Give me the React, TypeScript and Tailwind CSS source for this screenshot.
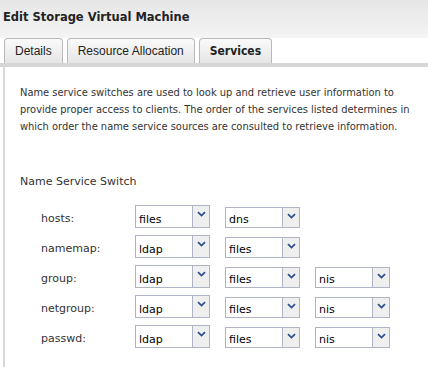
const rows: { label: string; values: string[] }[] = [
  { label: "hosts:", values: ["files", "dns"] },
  { label: "namemap:", values: ["ldap", "files"] },
  { label: "group:", values: ["ldap", "files", "nis"] },
  { label: "netgroup:", values: ["ldap", "files", "nis"] },
  { label: "passwd:", values: ["ldap", "files", "nis"] },
];

function Chevron() {
  return (
    <svg width="9" height="6" viewBox="0 0 9 6" aria-hidden>
      <path d="M1 1.2 L4.5 4.6 L8 1.2" fill="none" stroke="#2e4f8f" strokeWidth="1.8" />
    </svg>
  );
}

function Select({ value, first }: { value: string; first?: boolean }) {
  return (
    <div
      className={`flex w-[75px] border border-[#aeb3c6] bg-white ${first ? "h-[23px]" : "mt-[2px] h-[21px]"}`}
    >
      <div className="flex flex-1 items-end pb-[2px] pl-[3px] font-['DejaVu_Sans',sans-serif] text-[11px] leading-none text-black">
        {value}
      </div>
      <div className="flex w-[17px] justify-center border-l border-[#aeb3c6] bg-[#efefef] pt-[5px]">
        <Chevron />
      </div>
    </div>
  );
}

function Tab({ label, active }: { label: string; active?: boolean }) {
  return (
    <div
      className={`flex h-[25px] items-center justify-center rounded-t-[4px] border border-b-0 border-[#b9b9b9] bg-gradient-to-b from-[#fafafa] to-[#e6e6e6] px-[10px] text-[#222] ${
        active
          ? "font-['DejaVu_Sans_Condensed','DejaVu_Sans',sans-serif] text-[12px] font-bold"
          : "font-['Liberation_Sans',sans-serif] text-[12px]"
      }`}
    >
      {label}
    </div>
  );
}

export default function App() {
  return (
    <div className="h-[367px] w-[428px] overflow-hidden bg-white font-['DejaVu_Sans',sans-serif]">
      <div className="h-[38px] bg-gradient-to-b from-[#e6e6e6] to-[#f4f4f4] pl-[3px] pt-[9px] text-[11.5px] font-bold text-[#222]">
        Edit Storage Virtual Machine
      </div>
      <div className="flex gap-[4px] pl-[4px]">
        <Tab label="Details" />
        <Tab label="Resource Allocation" />
        <Tab label="Services" active />
      </div>
      <div className="h-[4px] bg-[#d6d6d6]" />
      <div className="ml-[3px] h-[300px] border-l-[2px] border-[#d9d9d9] pl-[15px] text-[#333]">
        <p className="pt-[17px] font-['DejaVu_Sans_Condensed','DejaVu_Sans',sans-serif] text-[11px] leading-[17px]">
          Name service switches are used to look up and retrieve user information to provide proper
          access to clients. The order of the services listed determines in which order the name
          service sources are consulted to retrieve information.
        </p>
        <div className="pt-[38px] text-[11px] leading-[17px]">Name Service Switch</div>
        <div className="flex flex-col gap-[7px] pl-[21px] pt-[15px]">
          {rows.map((row) => (
            <div key={row.label} className="flex items-start">
              <div className="w-[94px] pt-[7px] text-[11px] leading-[14px] text-[#333]">{row.label}</div>
              <div className="flex gap-[15px]">
                {row.values.map((v, i) => (
                  <Select key={i} value={v} first={i === 0} />
                ))}
              </div>
            </div>
          ))}
        </div>
      </div>
    </div>
  );
}
